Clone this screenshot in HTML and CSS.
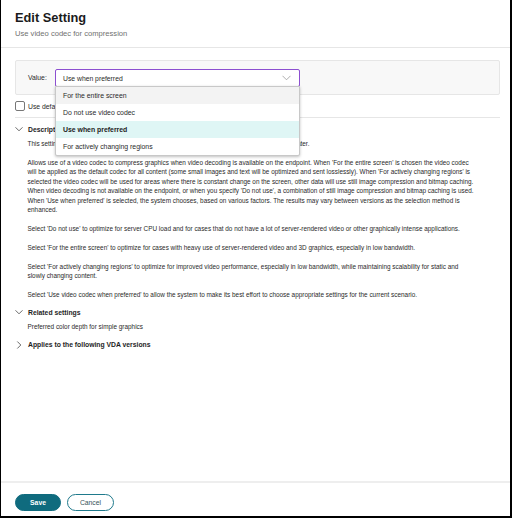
FILE: index.html
```html
<!DOCTYPE html>
<html>
<head>
<meta charset="utf-8">
<link rel="stylesheet" href="styles.css">
</head>
<body>
<div class="dialog">
  <header class="head">
    <h1 class="title">Edit Setting</h1>
    <div class="subtitle">Use video codec for compression</div>
  </header>
  <main class="content">
    <div class="panel">
      <span class="label">Value:</span>
      <div class="select-wrap">
        <div class="select">
          <span>Use when preferred</span>
          <svg class="sel-chev" width="9" height="6" viewBox="0 0 9 6"><path d="M0.5 0.8 L4.5 4.8 L8.5 0.8" fill="none" stroke="#9a9a9a" stroke-width="0.8"/></svg>
        </div>
        <ul class="menu">
          <li class="item hover">For the entire screen</li>
          <li class="item">Do not use video codec</li>
          <li class="item selected">Use when preferred</li>
          <li class="item">For actively changing regions</li>
        </ul>
      </div>
    </div>
    <label class="check-row"><span class="box"></span><span>Use default value</span></label>
    <hr class="rule">
    <section class="sec">
      <div class="sec-head"><svg class="chev" width="8" height="8" viewBox="0 0 8 8"><path d="M0.5 2.3 L4 5.8 L7.5 2.3" fill="none" stroke="#444" stroke-width="0.8"/></svg><span>Description</span></div>
      <div class="sec-body">
        <p>This setting applies to Virtual Delivery Agents (VDAs) for Server OS and Desktop OS 7.16 and later.</p>
        <p>Allows use of a video codec to compress graphics when video decoding is available on the endpoint. When 'For the entire screen' is chosen the video codec will be applied as the default codec for all content (some small images and text will be optimized and sent losslessly). When 'For actively changing regions' is selected the video codec will be used for areas where there is constant change on the screen, other data will use still image compression and bitmap caching. When video decoding is not available on the endpoint, or when you specify 'Do not use', a combination of still image compression and bitmap caching is used. When 'Use when preferred' is selected, the system chooses, based on various factors. The results may vary between versions as the selection method is enhanced.</p>
        <p>Select 'Do not use' to optimize for server CPU load and for cases that do not have a lot of server-rendered video or other graphically intense applications.</p>
        <p>Select 'For the entire screen' to optimize for cases with heavy use of server-rendered video and 3D graphics, especially in low bandwidth.</p>
        <p>Select 'For actively changing regions' to optimize for improved video performance, especially in low bandwidth, while maintaining scalability for static and slowly changing content.</p>
        <p>Select 'Use video codec when preferred' to allow the system to make its best effort to choose appropriate settings for the current scenario.</p>
      </div>
    </section>
    <section class="sec">
      <div class="sec-head"><svg class="chev" width="8" height="8" viewBox="0 0 8 8"><path d="M0.5 2.3 L4 5.8 L7.5 2.3" fill="none" stroke="#444" stroke-width="0.8"/></svg><span>Related settings</span></div>
      <div class="sec-body"><p>Preferred color depth for simple graphics</p></div>
    </section>
    <section class="sec">
      <div class="sec-head"><svg class="chev" width="8" height="8" viewBox="0 0 8 8"><path d="M2.3 0.5 L5.8 4 L2.3 7.5" fill="none" stroke="#444" stroke-width="0.8"/></svg><span>Applies to the following VDA versions</span></div>
    </section>
  </main>
  <footer class="foot">
    <button class="btn primary">Save</button>
    <button class="btn ghost">Cancel</button>
  </footer>
</div>
</body>
</html>
```
FILE: styles.css
```css
* { box-sizing: border-box; }
html, body { margin: 0; padding: 0; }
body {
  width: 512px;
  height: 518px;
  background: #fff;
  font-family: "Liberation Sans", Arial, sans-serif;
  color: #333;
  overflow: hidden;
}
.dialog {
  width: 512px;
  height: 518px;
  border-left: 1px solid #000;
  border-right: 2px solid #000;
  border-bottom: 2px solid #000;
  display: flex;
  flex-direction: column;
  background: #fff;
}
.head {
  padding: 10px 15px 8px 14px;
  border-bottom: 1px solid #e6e6e6;
}
.title {
  margin: 0;
  font-size: 12.8px;
  line-height: 16px;
  font-weight: 700;
  color: #1b1b1b;
}
.subtitle {
  margin-top: 2px;
  font-size: 7.6px;
  line-height: 11px;
  color: #707070;
}
.content {
  flex: 1;
  padding: 12px 10px 0 14px;
}
.panel {
  height: 35px;
  background: #f8f8f8;
  border: 1px solid #e6e6e6;
  border-radius: 2px;
  display: flex;
  align-items: flex-start;
  padding: 8px 0 0 12px;
}
.label {
  font-size: 6.8px;
  line-height: 17px;
  color: #2a2a2a;
  width: 27px;
}
.select-wrap {
  position: relative;
  width: 245px;
}
.select {
  height: 18px;
  border: 1px solid #8c4fd0;
  border-radius: 2px;
  background: #fff;
  display: flex;
  align-items: center;
  justify-content: space-between;
  padding: 0 8px 0 7px;
  font-size: 6.8px;
  color: #2a2a2a;
}
.menu {
  position: absolute;
  left: 0;
  top: 17px;
  width: 245px;
  margin: 0;
  padding: 0;
  list-style: none;
  background: #fff;
  border: 1px solid #c8c8c8;
  border-radius: 0 0 2px 2px;
  box-shadow: 0 1px 3px rgba(0,0,0,0.25);
  z-index: 5;
}
.item {
  height: 17px;
  line-height: 17px;
  padding-left: 7px;
  font-size: 6.9px;
  color: #2a2a2a;
}
.item.hover { background: #f3f3f3; }
.item.selected { background: #dff6f5; font-weight: 700; color: #222; }
.check-row {
  display: flex;
  align-items: center;
  gap: 3px;
  margin-top: 6px;
  height: 10px;
  font-size: 6.8px;
  color: #2a2a2a;
}
.box {
  width: 10px;
  height: 10px;
  border: 1px solid #777;
  border-radius: 2px;
  background: #fff;
}
.rule {
  margin: 6px 0 0 0;
  border: 0;
  border-top: 1px solid #e6e6e6;
}
.sec-head {
  display: flex;
  align-items: center;
  gap: 5px;
  font-size: 6.8px;
  font-weight: 700;
  color: #1e1e1e;
  height: 12px;
}
.sec:first-of-type .sec-head { margin-top: 5px; }
.sec-body {
  padding-left: 12.5px;
}
.sec-body p {
  max-width: 448px;
  margin: 0 0 9.5px 0;
  font-size: 6.4px;
  line-height: 9.4px;
  color: #2a2a2a;
}
.sec-body p:first-child { margin-top: 4px; }
.sec-body p:last-child { margin-bottom: 7px; }
.foot {
  border-top: 2px solid #eeeeee;
  padding: 11px 0 5px 14px;
  display: flex;
  gap: 6px;
}
.btn {
  height: 17px;
  border-radius: 9px;
  font-family: "Liberation Sans", Arial, sans-serif;
  font-size: 6.8px;
  font-weight: 700;
  padding: 0;
  cursor: pointer;
}
.btn.primary {
  width: 46px;
  background: #0f6b7e;
  border: 1px solid #0f6b7e;
  color: #fff;
}
.btn.ghost {
  width: 47px;
  background: #fff;
  border: 1px solid #1f7a8c;
  color: #35525a;
  font-weight: 400;
}
```
